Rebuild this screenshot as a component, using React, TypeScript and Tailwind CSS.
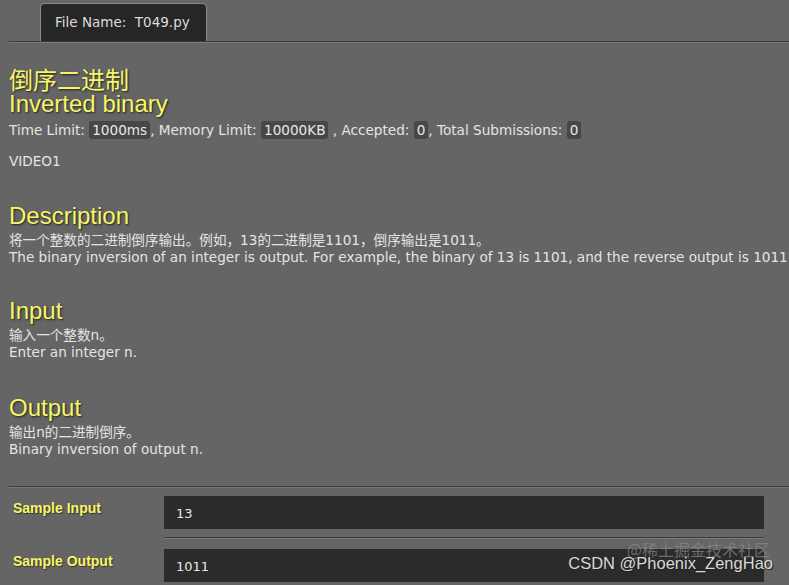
import React from "react";

const body = { fontFamily: "'DejaVu Sans', Verdana, sans-serif" };
const head = { fontFamily: "'Liberation Sans', Arial, sans-serif", textShadow: "1px 1px 2px #222" };
const cjk = { fontFamily: "'DejaVu Sans', 'Noto Sans CJK SC', sans-serif" };

function Chip({ children }: { children: React.ReactNode }) {
  return <span className="rounded-[3px] bg-[#474747] px-[3px] py-[1px] text-[#e8e8e8]">{children}</span>;
}

function H({ children }: { children: React.ReactNode }) {
  return (
    <div className="text-[24px] leading-[25px] text-[#f6f66a]" style={head}>
      {children}
    </div>
  );
}

const label = { fontFamily: "'Liberation Sans', Arial, sans-serif", textShadow: "1px 1px 1px #333" };

export default function App() {
  return (
    <div className="relative w-[789px] h-[585px] overflow-hidden bg-[#656565] text-[#e4e4e4]" style={body}>
      <div className="pt-[3px] pl-[40px]">
        <div className="w-[167px] h-[38px] rounded-t-[5px] border border-b-0 border-[#8a8a8a] bg-[#262626] pl-[14px] pt-[8px] text-[13.5px] text-[#dcdcdc]">
          File Name:&nbsp; T049.py
        </div>
      </div>
      <div className="ml-[9px] h-[2px] border-t border-[#3c3c3c] border-b border-b-[#7a7a7a]" />

      <div className="pl-[9px] pt-[24px] text-[13.6px] leading-[17px]">
        <div className="text-[24px] text-[#f6f66a]" style={{ ...head, fontFamily: "'Noto Sans CJK SC', sans-serif", lineHeight: "24px" }}>
          倒序二进制
        </div>
        <H>Inverted binary</H>
        <div className="mt-[6px] whitespace-nowrap">
          Time Limit: <Chip>1000ms</Chip>, Memory Limit: <Chip>10000KB</Chip> , Accepted: <Chip>0</Chip>, Total Submissions: <Chip>0</Chip>
        </div>
        <div className="mt-[14px]">VIDEO1</div>

        <div className="mt-[33px]">
          <H>Description</H>
          <div className="mt-[4px] whitespace-nowrap" style={cjk}>将一个整数的二进制倒序输出。例如，13的二进制是1101，倒序输出是1011。</div>
          <div className="whitespace-nowrap">The binary inversion of an integer is output. For example, the binary of 13 is 1101, and the reverse output is 1011</div>
        </div>

        <div className="mt-[32px]">
          <H>Input</H>
          <div className="mt-[4px]" style={cjk}>输入一个整数n。</div>
          <div>Enter an integer n.</div>
        </div>

        <div className="mt-[34px]">
          <H>Output</H>
          <div className="mt-[4px]" style={cjk}>输出n的二进制倒序。</div>
          <div>Binary inversion of output n.</div>
        </div>
      </div>

      <div className="mt-[28px] ml-[9px] h-[2px] border-t border-[#3c3c3c] border-b border-b-[#7a7a7a]" />

      <div className="flex flex-col pt-[8px]">
        <div className="flex">
          <div className="w-[164px] pl-[13px] pt-[2px] text-[14px] font-bold text-[#f6f66a]" style={label}>Sample Input</div>
          <div className="w-[600px] h-[33px] bg-[#2b2b2b] pl-[12px] pt-[8px] text-[13px] text-[#e8e8e8]">13</div>
        </div>
        <div className="ml-[164px] w-[600px] mt-[8px] h-[2px] border-t border-[#3c3c3c] border-b border-b-[#7a7a7a]" />
        <div className="flex mt-[10px]">
          <div className="w-[164px] pl-[13px] pt-[2px] text-[14px] font-bold text-[#f6f66a]" style={label}>Sample Output</div>
          <div className="w-[600px] h-[33px] bg-[#2b2b2b] pl-[12px] pt-[8px] text-[13px] text-[#e8e8e8]">1011</div>
        </div>
      </div>

      <div className="absolute right-[19px] bottom-[24px] text-[16px] text-[#8a8a8a] opacity-70" style={{ fontFamily: "'Noto Sans CJK SC', sans-serif" }}>@稀土掘金技术社区</div>
      <div className="absolute right-[16px] bottom-[9px] text-[16.5px] text-[#d8d8d8]" style={{ fontFamily: "'Liberation Sans', Arial, sans-serif", textShadow: "1px 1px 1px #222" }}>CSDN @Phoenix_ZengHao</div>
    </div>
  );
}
